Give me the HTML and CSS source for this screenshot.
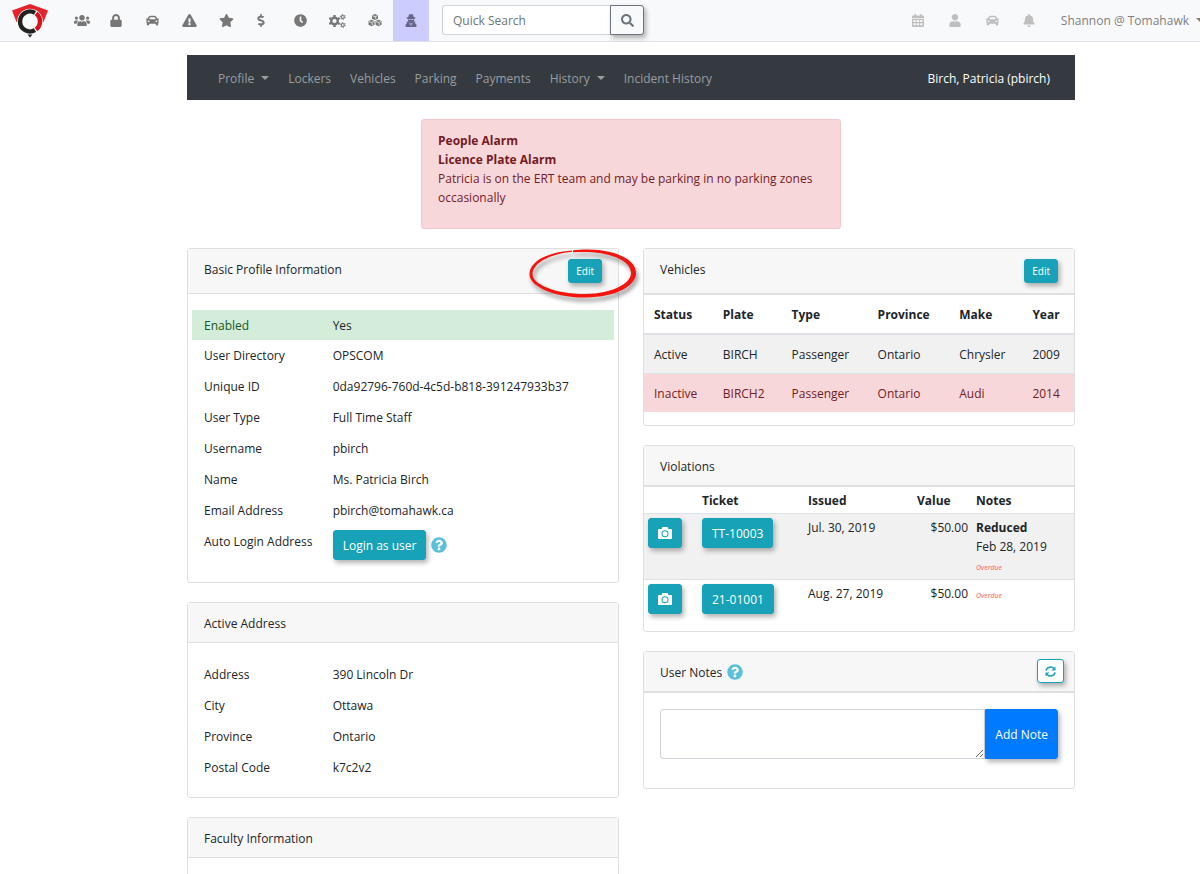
FILE: index.html
```html
<!DOCTYPE html>
<html lang="en">
<head>
<meta charset="utf-8">
<title>Profile - Birch, Patricia</title>
<link rel="stylesheet" href="styles.css">
</head>
<body>
<svg class="sprite" aria-hidden="true">
  <symbol id="i-car" viewBox="0 0 512 512"><path d="M499.99 176h-59.87l-16.64-41.6C406.38 91.63 365.57 64 319.5 64h-127c-46.06 0-86.88 27.63-103.99 70.4L71.87 176H12.01C4.2 176-1.53 183.34.37 190.91l6 24C7.7 220.25 12.5 224 18.01 224h20.07C24.65 235.73 16 252.78 16 272v48c0 16.12 6.16 30.67 16 41.93V416c0 17.67 14.33 32 32 32h32c17.67 0 32-14.33 32-32v-32h256v32c0 17.67 14.33 32 32 32h32c17.67 0 32-14.33 32-32v-54.07c9.84-11.25 16-25.8 16-41.93v-48c0-19.22-8.65-36.27-22.07-48H494c5.51 0 10.31-3.75 11.64-9.09l6-24c1.89-7.57-3.84-14.91-11.65-14.91zm-352.06-17.83c7.29-18.22 24.94-30.17 44.57-30.17h127c19.63 0 37.28 11.95 44.57 30.17L384 208H128l19.93-49.83zM96 319.8c-19.2 0-32-12.76-32-31.9S76.8 256 96 256s48 28.71 48 47.85-28.8 15.95-48 15.95zm320 0c-19.2 0-48 3.19-48-15.95S396.8 256 416 256s32 12.76 32 31.9-12.8 31.9-32 31.9z"/></symbol>
  <symbol id="i-help" viewBox="0 0 512 512"><path d="M504 256c0 136.997-111.043 248-248 248S8 392.997 8 256C8 119.083 119.043 8 256 8s248 111.083 248 248zM262.655 90c-54.497 0-89.255 22.957-116.549 63.758-3.536 5.286-2.353 12.415 2.715 16.258l34.699 26.31c5.205 3.947 12.621 3.008 16.665-2.122 17.864-22.658 30.113-35.797 57.303-35.797 20.429 0 45.698 13.148 45.698 32.958 0 14.976-12.363 22.667-32.534 33.976C247.128 238.528 216 254.941 216 296v4c0 6.627 5.373 12 12 12h56c6.627 0 12-5.373 12-12v-1.333c0-28.462 83.186-29.647 83.186-106.667 0-58.002-60.165-102-116.531-102zM256 338c-25.365 0-46 20.635-46 46 0 25.364 20.635 46 46 46s46-20.636 46-46c0-25.365-20.635-46-46-46z"/></symbol>
  <symbol id="i-camera" viewBox="0 0 14 12"><path fill-rule="evenodd" d="M1 2h2.500L4.500 0h5l1 2H13a1 1 0 0 1 1 1v8a1 1 0 0 1-1 1H1a1 1 0 0 1-1-1V3a1 1 0 0 1 1-1zM7 3.300a3.500 3.500 0 1 0 0 7 3.500 3.500 0 0 0 0-7zM7 4.300a2.500 2.500 0 1 1 0 5 2.500 2.500 0 0 1 0-5z"/></symbol>
</svg>

<header class="topbar">
  <a class="logo" href="#" aria-label="Home">
    <svg viewBox="0 0 36 34" width="36" height="34">
      <path fill="#e3242b" d="M18 0 36 6.500 31.500 18h-27L0 6.500z"/>
      <circle cx="18" cy="17.500" r="12.800" fill="#f8f9fa"/>
      <path fill="none" stroke="#222" stroke-width="4.400" d="M23 26.200A10 10 0 1 1 23 8.800"/>
      <path fill="none" stroke="#d8121c" stroke-width="4.400" d="M24 9.500A10 10 0 0 1 24 25.500"/>
      <path fill="#222" d="M15.500 30.500h5l-2.500 3z"/>
    </svg>
  </a>
  <nav class="icon-nav" aria-label="Modules">
    <a class="icon-link icon-link--first" href="#" aria-label="Users"><svg width="16" height="13" viewBox="0 0 640 512"><path d="M96 224c35.3 0 64-28.700 64-64s-28.700-64-64-64-64 28.700-64 64 28.700 64 64 64zm448 0c35.300 0 64-28.700 64-64s-28.700-64-64-64-64 28.700-64 64 28.700 64 64 64zm32 32h-64c-17.600 0-33.500 7.100-45.100 18.600 40.300 22.100 68.900 62 75.100 109.400h66c17.700 0 32-14.300 32-32v-32c0-35.300-28.700-64-64-64zm-256 0c61.900 0 112-50.100 112-112S381.900 32 320 32 208 82.100 208 144s50.100 112 112 112zm76.800 32h-8.300c-20.800 10-43.900 16-68.500 16s-47.600-6-68.500-16h-8.300C179.600 288 128 339.600 128 403.200V432c0 26.500 21.500 48 48 48h288c26.500 0 48-21.500 48-48v-28.800c0-63.600-51.600-115.200-115.200-115.200zm-223.700-13.400C161.500 263.100 145.600 256 128 256H64c-35.300 0-64 28.700-64 64v32c0 17.700 14.300 32 32 32h65.900c6.300-47.400 34.900-87.300 75.200-109.400z"/></svg></a>
    <a class="icon-link" href="#" aria-label="Lockers"><svg width="12" height="13" viewBox="0 0 448 512"><path d="M400 224h-24v-72C376 68.200 307.800 0 224 0S72 68.200 72 152v72H48c-26.500 0-48 21.500-48 48v192c0 26.500 21.500 48 48 48h352c26.500 0 48-21.500 48-48V272c0-26.500-21.500-48-48-48zm-104 0H152v-72c0-39.700 32.300-72 72-72s72 32.300 72 72v72z"/></svg></a>
    <a class="icon-link" href="#" aria-label="Vehicles"><svg width="13" height="13"><use href="#i-car"/></svg></a>
    <a class="icon-link" href="#" aria-label="Incidents"><svg width="15" height="13" viewBox="0 0 576 512"><path d="M569.517 440.013C587.975 472.007 564.806 512 527.940 512H48.054c-36.937 0-59.999-40.055-41.577-71.987L246.423 23.985c18.467-32.009 64.720-31.951 83.154 0l239.940 416.028zM288 354c-25.405 0-46 20.595-46 46s20.595 46 46 46 46-20.595 46-46-20.595-46-46-46zm-43.673-165.346l7.418 136c.347 6.364 5.609 11.346 11.982 11.346h48.546c6.373 0 11.635-4.982 11.982-11.346l7.418-136c.375-6.874-5.098-12.654-11.982-12.654h-63.383c-6.884 0-12.356 5.780-11.981 12.654z"/></svg></a>
    <a class="icon-link" href="#" aria-label="Favourites"><svg width="15" height="13" viewBox="0 0 576 512"><path d="M259.300 17.800L194 150.200 47.900 171.500c-26.200 3.800-36.700 36.100-17.700 54.600l105.700 103-25 145.500c-4.500 26.300 23.200 46 46.400 33.700L288 439.600l130.700 68.700c23.200 12.200 50.900-7.400 46.400-33.700l-25-145.500 105.700-103c19-18.500 8.500-50.800-17.700-54.600L382 150.200 316.700 17.800c-11.700-23.600-45.600-23.900-57.400 0z"/></svg></a>
    <a class="icon-link icon-link--narrow" href="#" aria-label="Payments"><svg width="8" height="13" viewBox="0 0 288 512"><path d="M209.200 233.400l-108-31.600C88.700 198.200 80 186.500 80 173.500c0-16.300 13.200-29.500 29.500-29.500h66.300c12.200 0 24.200 3.700 34.200 10.500 6.100 4.100 14.300 3.100 19.500-2l34.800-34c7.100-6.900 6.100-18.400-1.800-24.500C238 74.800 207.400 64.100 176 64V16c0-8.800-7.200-16-16-16h-32c-8.800 0-16 7.200-16 16v48h-2.500C45.800 64-5.400 118.700.5 183.600c4.200 46.100 39.400 83.600 83.800 96.600l102.500 30c12.500 3.700 21.200 15.300 21.200 28.300 0 16.300-13.200 29.500-29.500 29.500h-66.300C100 368 88 364.300 78 357.500c-6.100-4.100-14.300-3.100-19.500 2l-34.800 34c-7.100 6.900-6.100 18.400 1.800 24.500 24.500 19.200 55.100 29.900 86.500 30v48c0 8.800 7.200 16 16 16h32c8.800 0 16-7.200 16-16v-48.200c46.600-.9 90.300-28.600 105.700-72.700 21.500-61.600-14.600-124.800-72.500-141.700z"/></svg></a>
    <a class="icon-link" href="#" aria-label="History"><svg width="13" height="13" viewBox="0 0 512 512"><path d="M256 8C119 8 8 119 8 256s111 248 248 248 248-111 248-248S393 8 256 8zm92.490 313l-20 25a16 16 0 0 1-22.490 2.500l-67-49.720a40 40 0 0 1-15-31.230V112a16 16 0 0 1 16-16h32a16 16 0 0 1 16 16v144l58 42.500a16 16 0 0 1 2.490 22.500z"/></svg></a>
    <a class="icon-link" href="#" aria-label="Settings"><svg width="17" height="14" viewBox="0 0 17 14"><circle cx="5.500" cy="7" r="3.300" fill="none" stroke="currentColor" stroke-width="2.400"/><path fill="none" stroke="currentColor" stroke-width="2.400" d="M5.500 1v2M5.500 11v2M.3 4l1.800 1M8.900 9l1.800 1M.3 10l1.800-1M8.900 5l1.800-1"/><g fill="none" stroke="currentColor"><circle cx="13.800" cy="3" r="1.500" stroke-width="1.200"/><circle cx="13.800" cy="11" r="1.500" stroke-width="1.200"/><circle cx="13.800" cy="3" r="2.500" stroke-dasharray="1.300 1.318"/><circle cx="13.800" cy="11" r="2.500" stroke-dasharray="1.300 1.318"/></g></svg></a>
    <a class="icon-link" href="#" aria-label="Inventory"><svg width="14" height="13" viewBox="0 0 14 13"><path d="M7 0l3 1.200v3.500L7 6 4 4.700V1.200zM3.500 5.800l3 1.200v3.800L3.500 12.300l-3-1.500V7zM10.500 5.800l3 1.200v3.800l-3 1.500-3-1.500V7z"/><path fill="none" stroke="#f8f9fa" stroke-width=".8" d="M4.500 1.700L7 2.600l2.500-.9M7.700 4.900V3M1 7.500l2.500 1L6 7.500M4.200 11.200V9M8 7.500l2.500 1 2.500-1M11.200 11.200V9"/></svg></a>
    <a class="icon-link icon-link--active" href="#" aria-label="Patrol" aria-current="page"><svg width="12" height="13" viewBox="0 0 12 13"><path fill-rule="evenodd" d="M3.300 3 4 .5Q4.500-.2 5.200.3 6 .7 6.800.3 7.500-.2 8 .5L8.700 3l1.800.6v.7l-1.300.4q.1 2-.7 2.900l2 .1-.6 1.500Q11.500 10 11.500 11v1.200q0 .8-.8.8H1.300q-.8 0-.8-.8V11q0-1 1.600-1.800L1.500 7.700l2-.1Q2.700 6.700 2.800 4.700l-1.300-.4v-.7zM3.700 5v.7q1.300.8 2-.4h.6q.7 1.200 2 .4V5zM4.500 8.500l.7 3.500.5-2.500zM7.500 8.500l-1.200 1 .5 2.500z"/></svg></a>
  </nav>
  <form class="search" role="search">
    <input class="search-input" type="search" placeholder="Quick Search" aria-label="Quick Search">
    <button class="search-btn" type="button" aria-label="Search"><svg width="13" height="13" viewBox="0 0 512 512"><path d="M505 442.700L405.300 343c-4.500-4.500-10.600-7-17-7H372c27.600-35.300 44-79.700 44-128C416 93.100 322.900 0 208 0S0 93.100 0 208s93.100 208 208 208c48.300 0 92.700-16.400 128-44v16.300c0 6.400 2.500 12.500 7 17l99.700 99.700c9.400 9.400 24.600 9.400 33.900 0l28.300-28.300c9.400-9.400 9.400-24.600.1-34zM208 336c-70.700 0-128-57.200-128-128 0-70.700 57.200-128 128-128 70.700 0 128 57.200 128 128 0 70.700-57.200 128-128 128z"/></svg></button>
  </form>
  <nav class="status-nav" aria-label="Account">
    <a class="icon-link" href="#" aria-label="Calendar"><svg width="12" height="13" viewBox="0 0 12 13"><path fill-rule="evenodd" d="M2.500 0h1.600v1.500h3.800V0h1.600v1.500H11a1 1 0 0 1 1 1V4H0V2.500a1 1 0 0 1 1-1h1.500zM0 4.800h12V12a1 1 0 0 1-1 1H1a1 1 0 0 1-1-1zM1.500 6v2h2.300V6zm3.400 0v2h2.200V6zm3.300 0v2h2.300V6zM1.500 9.300v2h2.300v-2zm3.400 0v2h2.200v-2zm3.300 0v2h2.300v-2z"/></svg></a>
    <a class="icon-link" href="#" aria-label="Person"><svg width="12" height="13" viewBox="0 0 448 512"><path d="M224 256c70.700 0 128-57.300 128-128S294.700 0 224 0 96 57.300 96 128s57.300 128 128 128zm89.600 32h-16.700c-22.200 10.200-46.900 16-72.900 16s-50.600-5.800-72.900-16h-16.700C60.200 288 0 348.200 0 422.400V464c0 26.500 21.500 48 48 48h352c26.500 0 48-21.500 48-48v-41.600c0-74.200-60.200-134.400-134.400-134.400z"/></svg></a>
    <a class="icon-link" href="#" aria-label="Vehicle"><svg width="13" height="13"><use href="#i-car"/></svg></a>
    <a class="icon-link" href="#" aria-label="Alerts"><svg width="12" height="13" viewBox="0 0 448 512"><path d="M224 512c35.320 0 63.970-28.650 63.970-64H160.030c0 35.350 28.650 64 63.970 64zm215.390-149.710c-19.320-20.760-55.470-51.990-55.470-154.290 0-77.700-54.480-139.900-127.940-155.160V32c0-17.670-14.320-32-31.980-32s-31.980 14.330-31.980 32v20.840C118.560 68.100 64.080 130.300 64.080 208c0 102.300-36.150 133.530-55.470 154.290-6 6.450-8.660 14.160-8.610 21.710.11 16.400 12.980 32 32.100 32h383.800c19.120 0 32-15.600 32.100-32 .05-7.550-2.610-15.270-8.610-21.710z"/></svg></a>
    <a class="account caret" href="#">Shannon @ Tomahawk</a>
  </nav>
</header>

<main class="page">
  <nav class="subnav" aria-label="Profile sections">
    <a class="caret" href="#">Profile</a>
    <a href="#">Lockers</a>
    <a href="#">Vehicles</a>
    <a href="#">Parking</a>
    <a href="#">Payments</a>
    <a class="caret" href="#">History</a>
    <a href="#">Incident History</a>
    <span class="subnav-user">Birch, Patricia (pbirch)</span>
  </nav>

  <div class="alert" role="alert">
    <strong>People Alarm</strong><br>
    <strong>Licence Plate Alarm</strong><br>
    Patricia is on the ERT team and may be parking in no parking zones occasionally
  </div>

  <div class="columns">
    <div class="column">
      <section class="card">
        <div class="card-header">
          <h2>Basic Profile Information</h2>
          <div class="marked">
            <button class="btn btn-sm" type="button">Edit</button>
            <svg class="ring" width="112" height="56" viewBox="0 0 112 56" aria-hidden="true"><path fill="#f5150f" fill-rule="evenodd" d="M44 2.500C22 4 2 12 1.500 26 1 38 26 50 58 49.500 88 49 108 38 108 25 108 10 84 1.500 60 1.500 54 1.500 49 1.800 45 2.300V4.300C50 3.800 56 3.800 60 4 82 5 103 12 103 25 103 35.500 84 45.500 58 46 29 46.500 4 36.500 4.500 26 5 15 22 6 44 3.800z"/></svg>
          </div>
        </div>
        <dl class="details">
          <div class="detail detail--success"><dt>Enabled</dt><dd>Yes</dd></div>
          <div class="detail"><dt>User Directory</dt><dd>OPSCOM</dd></div>
          <div class="detail"><dt>Unique ID</dt><dd>0da92796-760d-4c5d-b818-391247933b37</dd></div>
          <div class="detail"><dt>User Type</dt><dd>Full Time Staff</dd></div>
          <div class="detail"><dt>Username</dt><dd>pbirch</dd></div>
          <div class="detail"><dt>Name</dt><dd>Ms. Patricia Birch</dd></div>
          <div class="detail"><dt>Email Address</dt><dd>pbirch@tomahawk.ca</dd></div>
          <div class="detail"><dt>Auto Login Address</dt><dd class="login"><button class="btn" type="button">Login as user</button><svg class="help" width="16" height="16"><use href="#i-help"/></svg></dd></div>
        </dl>
      </section>

      <section class="card">
        <div class="card-header"><h2>Active Address</h2></div>
        <dl class="details">
          <div class="detail"><dt>Address</dt><dd>390 Lincoln Dr</dd></div>
          <div class="detail"><dt>City</dt><dd>Ottawa</dd></div>
          <div class="detail"><dt>Province</dt><dd>Ontario</dd></div>
          <div class="detail"><dt>Postal Code</dt><dd>k7c2v2</dd></div>
        </dl>
      </section>

      <section class="card">
        <div class="card-header"><h2>Faculty Information</h2></div>
        <dl class="details"></dl>
      </section>
    </div>

    <div class="column">
      <section class="card card--table">
        <div class="card-header">
          <h2>Vehicles</h2>
          <button class="btn btn-sm" type="button">Edit</button>
        </div>
        <table class="vehicles">
          <thead><tr><th class="v-status">Status</th><th class="v-plate">Plate</th><th class="v-type">Type</th><th class="v-province">Province</th><th class="v-make">Make</th><th>Year</th></tr></thead>
          <tbody>
            <tr class="row-striped"><td>Active</td><td>BIRCH</td><td>Passenger</td><td>Ontario</td><td>Chrysler</td><td>2009</td></tr>
            <tr class="row-danger"><td>Inactive</td><td>BIRCH2</td><td>Passenger</td><td>Ontario</td><td>Audi</td><td>2014</td></tr>
          </tbody>
        </table>
      </section>

      <section class="card card--table">
        <div class="card-header"><h2>Violations</h2></div>
        <table class="violations">
          <thead><tr><th class="t-photo"></th><th class="t-ticket">Ticket</th><th class="t-issued">Issued</th><th class="t-value">Value</th><th>Notes</th></tr></thead>
          <tbody>
            <tr class="row-striped">
              <td><button class="btn" type="button" aria-label="Photos of TT-10003"><svg width="14" height="12"><use href="#i-camera"/></svg></button></td>
              <td><button class="btn" type="button">TT-10003</button></td>
              <td>Jul. 30, 2019</td><td class="amount">$50.00</td>
              <td><strong>Reduced</strong><br>Feb 28, 2019<br><em class="overdue">Overdue</em></td>
            </tr>
            <tr>
              <td><button class="btn" type="button" aria-label="Photos of 21-01001"><svg width="14" height="12"><use href="#i-camera"/></svg></button></td>
              <td><button class="btn" type="button">21-01001</button></td>
              <td>Aug. 27, 2019</td><td class="amount">$50.00</td>
              <td><em class="overdue">Overdue</em></td>
            </tr>
          </tbody>
        </table>
      </section>

      <section class="card">
        <div class="card-header card-header--notes">
          <h2>User Notes</h2>
          <svg class="help" width="16" height="16"><use href="#i-help"/></svg>
          <button class="btn btn-sm btn-outline" type="button" aria-label="Refresh"><svg width="11" height="11" viewBox="0 0 11 11"><path fill="none" stroke="currentColor" stroke-width="1.600" d="M1 4.700A4.600 4.600 0 0 1 9 2.600M10 6.300A4.600 4.600 0 0 1 2 8.400"/><path d="M10.500.5v4h-4zM.5 10.500v-4h4z"/></svg></button>
        </div>
        <form class="note-form">
          <textarea aria-label="Note"></textarea>
          <button class="btn btn-primary" type="button">Add Note</button>
        </form>
      </section>
    </div>
  </div>
</main>
</body>
</html>
```
FILE: styles.css
```css
* {
  box-sizing: border-box;
}

html {
  overflow: hidden;
}

body {
  margin: 0;
  background: #fff;
  color: #212529;
  font: 12px/19px "Open Sans", sans-serif;
}

svg {
  display: block;
  fill: currentColor;
  flex: none;
}

.sprite {
  position: absolute;
  width: 0;
  height: 0;
}

a {
  color: inherit;
  text-decoration: none;
}

button,
input,
textarea {
  font: inherit;
}

.caret::after {
  content: "";
  display: inline-block;
  margin-left: 7px;
  vertical-align: 3px;
  border: 4px solid transparent;
  border-top-color: currentColor;
  border-bottom: 0;
}

/* Top bar */

.topbar {
  display: flex;
  align-items: center;
  height: 42px;
  padding-left: 12px;
  background: #f8f9fa;
  border-bottom: 1px solid #dee2e6;
  white-space: nowrap;
}

.logo {
  width: 54px;
}

.icon-nav,
.status-nav {
  display: flex;
  align-self: stretch;
}

.icon-nav {
  color: #777;
}

.icon-link {
  display: flex;
  align-items: center;
  justify-content: center;
  width: 37px;
}

.icon-link--first {
  width: 31px;
}

.icon-link--narrow {
  padding-right: 6px;
}

.icon-link--active {
  width: 36px;
  background: #ccccff;
  color: #666688;
}

.search {
  display: flex;
  margin: 0 0 1px 13px;
}

.search-input {
  width: 168px;
  height: 30px;
  padding: 0 10px;
  border: 1px solid #ced4da;
  border-right: 0;
  border-radius: 3px 0 0 3px;
  background: #fff;
  color: #495057;
}

.search-input::placeholder {
  color: #6c757d;
}

.search-btn {
  display: flex;
  align-items: center;
  justify-content: center;
  width: 34px;
  height: 30px;
  border: 1px solid #6c757d;
  border-radius: 0 3px 3px 0;
  background: #f8f9fa;
  color: #6c757d;
  box-shadow: 2px 3px 5px rgba(0, 0, 0, 0.3);
}

.status-nav {
  margin-left: auto;
  color: #bfbfbf;
}

.account {
  align-self: center;
  margin-left: 13px;
  margin-right: -4px;
  color: #7f7f7f;
}

/* Page */

.page {
  padding: 13px 125px 0 187px;
}

.subnav {
  display: flex;
  align-items: center;
  gap: 19px;
  padding: 14px 25px 12px 31px;
  background: #343a40;
  color: #9a9da0;
}

.subnav-user {
  margin-left: auto;
  color: #fff;
}

.alert {
  width: 420px;
  max-width: 100%;
  margin: 19px auto;
  padding: 11px 16px 21px;
  border: 1px solid #f5c6cb;
  border-radius: 3px;
  background: #f8d7da;
  color: #721c24;
}

.columns {
  display: grid;
  grid-template-columns: 1fr 1fr;
  gap: 24px;
  align-items: start;
}

.column {
  display: grid;
  gap: 19px;
}

/* Cards */

.card {
  border: 1px solid #dfdfdf;
  border-radius: 3px;
  background: #fff;
}

.card--table {
  padding-bottom: 13px;
}

.card-header {
  display: flex;
  align-items: flex-start;
  justify-content: space-between;
  padding: 10px 16px 8px;
  border-bottom: 1px solid #dfdfdf;
  background: #f7f7f7;
}

.card-header h2 {
  margin: 0;
  font-size: 12px;
  font-weight: 400;
  line-height: 21px;
}

.card-header .btn-sm {
  margin-bottom: 2px;
}

.card-header--notes {
  align-items: center;
  justify-content: flex-start;
  gap: 5px;
  padding: 7px 10px 6px 16px;
  border-bottom-width: 2px;
}

.card-header--notes .btn {
  margin-left: auto;
}

.marked {
  position: relative;
}

.ring {
  position: absolute;
  top: -11px;
  left: -40px;
  pointer-events: none;
  filter: drop-shadow(2px 4px 2px rgba(0, 0, 0, 0.4));
}

.details {
  margin: 0;
  padding: 16px 4px 14px;
}

.detail {
  display: grid;
  grid-template-columns: 1fr 2fr;
  padding: 6px 0;
}

.detail dt {
  padding-left: 12px;
}

.detail dd {
  margin: 0;
}

.detail--success {
  padding: 6px 0 5px;
  background: #d4edda;
}

.detail--success dt {
  color: #155724;
}

.detail .login {
  display: flex;
  align-items: center;
  gap: 5px;
  margin: -2px 0 2px;
}

.help {
  color: #5bc0de;
}

/* Buttons */

.btn {
  height: 30px;
  padding: 0 9px;
  border: 1px solid #17a2b8;
  border-radius: 3px;
  background: #17a2b8;
  color: #fff;
  box-shadow: 2px 3px 5px rgba(0, 0, 0, 0.3);
}

.btn-sm {
  display: block;
  height: 24px;
  padding: 0 7px;
  font-size: 10px;
  line-height: 16px;
}

.btn-outline {
  background: #fff;
  color: #17a2b8;
}

.btn-primary {
  height: auto;
  border-color: #007bff;
  border-radius: 0 3px 3px 0;
  background: #007bff;
}

/* Tables */

table {
  width: 100%;
  border-collapse: collapse;
  table-layout: fixed;
}

th,
td {
  border-top: 1px solid #dee2e6;
  text-align: left;
  vertical-align: top;
}

th {
  font-weight: 700;
}

.vehicles th,
.vehicles td {
  padding: 10px 0 9px 10px;
}

.vehicles th {
  border-bottom: 2px solid #dee2e6;
}

.v-status,
.v-plate {
  width: 16%;
}

.v-type {
  width: 20%;
}

.v-province {
  width: 19%;
}

.v-make {
  width: 17%;
}

.row-striped {
  background: #f1f1f1;
}

.row-danger {
  background: #f8d7da;
  color: #721c24;
}

.violations th {
  padding: 4px 4px 3px;
}

.violations td {
  padding: 4px;
}

.t-photo {
  width: 54px;
}

.t-ticket {
  width: 106px;
}

.t-issued {
  width: 109px;
}

.t-value {
  width: 59px;
}

.violations .btn {
  display: block;
}

.violations .amount {
  text-align: right;
}

.overdue {
  color: #ff5a4d;
  font-size: 7px;
  line-height: 1;
}

/* Notes */

.note-form {
  display: flex;
  padding: 16px 16px 29px;
}

.note-form textarea {
  flex: 1;
  height: 50px;
  border: 1px solid #ced4da;
  border-radius: 3px 0 0 3px;
}
```
